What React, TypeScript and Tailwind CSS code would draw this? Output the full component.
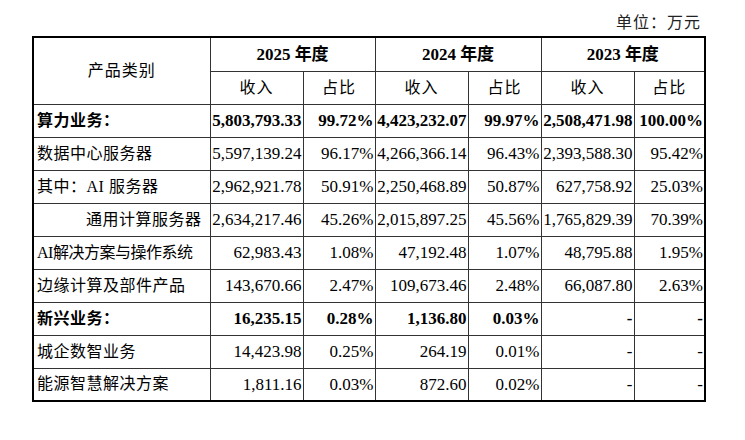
const font = { fontFamily: '"Liberation Serif", "Noto Sans CJK SC", serif' }

type Row = { label: string; bold?: boolean; indent?: boolean; tight?: boolean; v: string[] }

const rows: Row[] = [
  { label: "算力业务：", bold: true, v: ["5,803,793.33", "99.72%", "4,423,232.07", "99.97%", "2,508,471.98", "100.00%"] },
  { label: "数据中心服务器", v: ["5,597,139.24", "96.17%", "4,266,366.14", "96.43%", "2,393,588.30", "95.42%"] },
  { label: "其中：AI 服务器", v: ["2,962,921.78", "50.91%", "2,250,468.89", "50.87%", "627,758.92", "25.03%"] },
  { label: "通用计算服务器", indent: true, v: ["2,634,217.46", "45.26%", "2,015,897.25", "45.56%", "1,765,829.39", "70.39%"] },
  { label: "AI解决方案与操作系统", tight: true, v: ["62,983.43", "1.08%", "47,192.48", "1.07%", "48,795.88", "1.95%"] },
  { label: "边缘计算及部件产品", v: ["143,670.66", "2.47%", "109,673.46", "2.48%", "66,087.80", "2.63%"] },
  { label: "新兴业务：", bold: true, v: ["16,235.15", "0.28%", "1,136.80", "0.03%", "-", "-"] },
  { label: "城企数智业务", v: ["14,423.98", "0.25%", "264.19", "0.01%", "-", "-"] },
  { label: "能源智慧解决方案", v: ["1,811.16", "0.03%", "872.60", "0.02%", "-", "-"] },
]

const years = ["2025", "2024", "2023"]

export default function App() {
  return (
    <div className="w-[745px] h-[440px] bg-white text-black text-[16px]" style={font}>
      <div className="flex justify-end pr-[44px] pt-[13px] h-[36px] leading-[20px] tracking-[1px] text-[#222]">
        单位：万元
      </div>
      <table className="ml-[32px] w-[672px] table-fixed border-collapse border-2 border-black">
        <colgroup>
          <col className="w-[177px]" />
          <col className="w-[93px]" />
          <col className="w-[72px]" />
          <col className="w-[93px]" />
          <col className="w-[73px]" />
          <col className="w-[93px]" />
          <col className="w-[71px]" />
        </colgroup>
        <thead>
          <tr className="h-[34px]">
            <th rowSpan={2} className="border border-[#333] font-normal text-center tracking-[1px]">
              产品类别
            </th>
            {years.map((y) => (
              <th key={y} colSpan={2} className="border border-[#333] font-bold text-center text-[17px]">
                {y} 年度
              </th>
            ))}
          </tr>
          <tr className="h-[33px]">
            {years.map((y) => (
              <>
                <th key={y + "a"} className="border border-[#333] font-normal text-center tracking-[1px]">
                  收入
                </th>
                <th key={y + "b"} className="border border-[#333] font-normal text-center tracking-[1px]">
                  占比
                </th>
              </>
            ))}
          </tr>
        </thead>
        <tbody>
          {rows.map((r) => (
            <tr key={r.label} className={`h-[33px] ${r.bold ? "font-bold" : ""}`}>
              <td
                className={`border border-[#333] whitespace-nowrap ${r.indent ? "pl-[52px]" : "pl-[3px]"} ${
                  r.tight ? "tracking-[-0.5px]" : "tracking-[0.5px]"
                }`}
              >
                {r.label}
              </td>
              {r.v.map((v, i) => (
                <td key={i} className="border border-[#333] text-right pr-[1px] whitespace-nowrap text-[17px]">
                  {v}
                </td>
              ))}
            </tr>
          ))}
        </tbody>
      </table>
    </div>
  )
}
